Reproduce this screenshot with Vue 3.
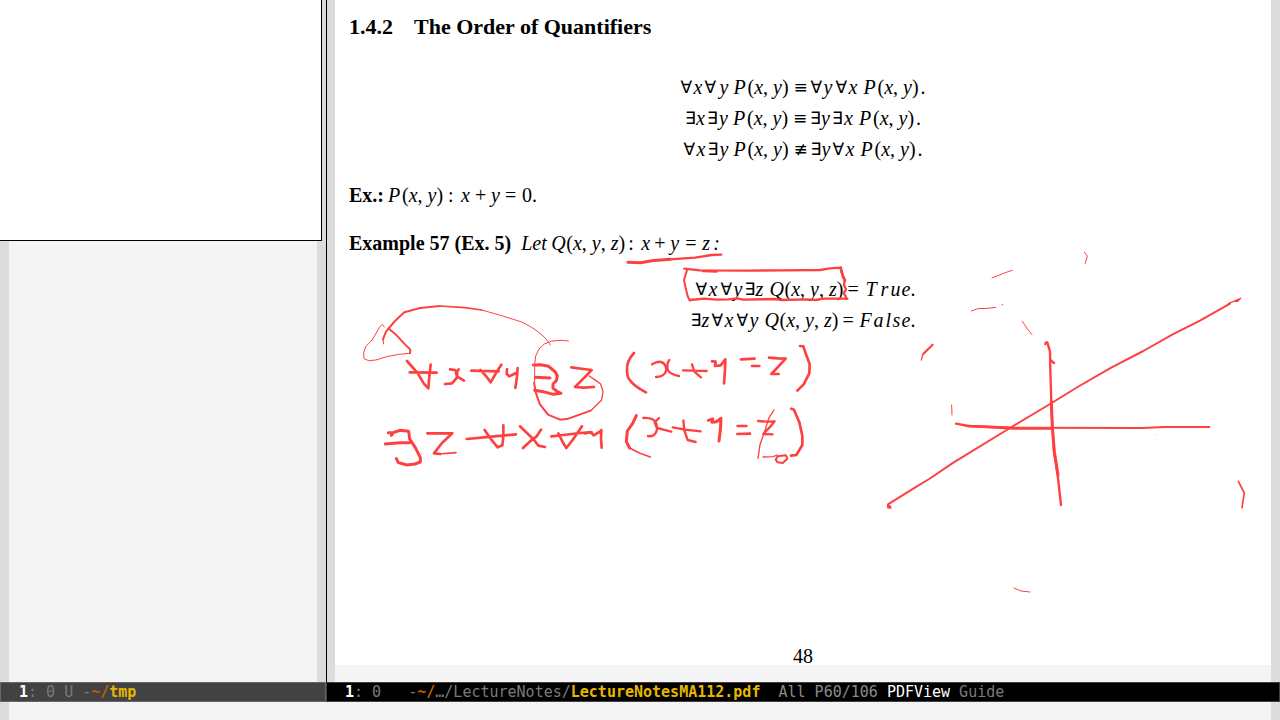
<script setup>
// Each token: [text, advance class, kind]
const q = 'quant'
const v = 'var'
const o = 'op'
const r = 'rel'
const quantifierRules = [
  [['∀', 'w13', q], ['x', 'w11', v], ['∀', 'w15', q], ['y', 'w14', v], ['P', 'w14', v], ['xy', 'w46', 'args'], ['≡', 'w17', r], ['∀', 'w13', q], ['y', 'w12', v], ['∀', 'w13', q], ['x', 'w15', v], ['P', 'w14', v], ['xy', 'w43', 'args'], ['.', 'w5', o]],
  [['∃', 'w11', q], ['x', 'w11', v], ['∃', 'w12', q], ['y', 'w14', v], ['P', 'w14', v], ['xy', 'w46', 'args'], ['≡', 'w17', r], ['∃', 'w11', q], ['y', 'w11', v], ['∃', 'w12', q], ['x', 'w15', v], ['P', 'w14', v], ['xy', 'w43', 'args'], ['.', 'w5', o]],
  [['∀', 'w13', q], ['x', 'w11', v], ['∃', 'w12', q], ['y', 'w14', v], ['P', 'w14', v], ['xy', 'w46', 'args'], ['≢', 'w17', r], ['∃', 'w11', q], ['y', 'w11', v], ['∀', 'w13', q], ['x', 'w15', v], ['P', 'w14', v], ['xy', 'w43', 'args'], ['.', 'w5', o]]
]
const results = [
  [['∀', 'w13', q], ['x', 'w12', v], ['∀', 'w13', q], ['y', 'w11', v], ['∃', 'w11', q], ['z', 'w14', v], ['Q', 'w15', v], ['xyz', 'w63', 'args'], ['=', 'w18', o], ['T', 'w15', v], ['r', 'w10', v], ['u', 'w11', v], ['e', 'w9', v], ['.', 'w5', o]],
  [['∃', 'w11', q], ['z', 'w10', v], ['∀', 'w13', q], ['x', 'w12', v], ['∀', 'w13', q], ['y', 'w15', v], ['Q', 'w15', v], ['xyz', 'w63', 'args'], ['=', 'w17', o], ['F', 'w14', v], ['a', 'w12', v], ['l', 'w7', v], ['s', 'w9', v], ['e', 'w9', v], ['.', 'w5', o]]
]
const pathLead = ': 0   -'
const pathGap = '  '
</script>

<template>
  <div class="frame">
    <div class="windows">
      <section class="pane left">
        <div class="buffer"></div>
        <div class="modeline idle"><b class="num">1</b>: 0 U -<b class="dir">~/</b><b class="file">tmp</b></div>
        <div class="preview"></div>
      </section>
      <section class="pane right">
        <div class="buffer">
          <article class="page">
            <h1><span class="secnum">1.4.2</span>The Order of Quantifiers</h1>
            <div class="rules">
              <div v-for="(row, i) in quantifierRules" :key="i" class="eq">
                <span v-for="(t, j) in row" :key="j" :class="['tok', t[1], t[2]]"><template v-if="t[2] === 'args'">(<i>x</i>, <i>y</i>)</template><template v-else>{{ t[0] }}</template></span>
              </div>
            </div>
            <p class="ex"><b>Ex.:</b><span class="eq lead"><i class="tok w14">P</i><span class="tok w46">(<i>x</i>, <i>y</i>)</span><span class="tok w13">:</span><i class="tok w14">x</i><span class="tok w16">+</span><i class="tok w14">y</i><span class="tok w17">=</span>0.</span></p>
            <p class="example"><b>Example 57 (Ex. 5)</b><span class="eq let"><i class="tok w30">Let</i><i class="tok w15">Q</i><span class="tok w62">(<i>x</i>, <i>y</i>, <i>z</i>)</span><span class="tok w13">:</span><i class="tok w13">x</i><span class="tok w16">+</span><i class="tok w15">y</i><span class="tok w17">=</span><i class="tok w11">z</i><i>:</i></span></p>
            <div class="results">
              <div v-for="(row, i) in results" :key="i" class="eq">
                <span v-for="(t, j) in row" :key="j" :class="['tok', t[1], t[2]]"><template v-if="t[2] === 'args'">(<i>x</i>, <i>y</i>, <i>z</i>)</template><template v-else>{{ t[0] }}</template></span>
              </div>
            </div>
            <footer>48</footer>
          </article>
        </div>
        <div class="modeline"><b class="num">1</b>{{ pathLead }}<b class="dir">~/</b>…/LectureNotes/<b class="file">LectureNotesMA112.pdf</b>{{ pathGap }}<span class="pos">All P60/106</span> <span class="mode">PDFView</span> Guide</div>
      </section>
    </div>
    <div class="echo"></div>

    <svg class="ink" width="1280" height="720" viewBox="0 0 1280 720" aria-hidden="true">
      <!-- underline and box -->
      <g transform="translate(600 230) scale(.33333)" stroke-width="7">
        <path d="M84 97L122 98 155 92 210 88" stroke-width="9" />
        <path d="M210 88L285 83 335 75 364 74" />
        <path d="M253 116L300 121 440 122 545 121 660 120 690 115 722 113 725 128 734 150 732 165 738 178 731 190 736 197 740 207" />
        <path d="M310 123L350 124M722 113L729 140 735 152" stroke-width="8" />
        <path d="M270 210L312 206 350 209 385 208 410 205 430 209 525 207 545 210 620 208 648 210 670 206 742 206" />
        <path d="M262 117L252 150 256 170 263 198 269 212" stroke-width="6" />
      </g>
      <!-- quantifier notes and arrow -->
      <g transform="translate(350 290) scale(.33333)">
        <path d="M601 165C590 145 565 120 515 96L455 77 395 60" stroke-width="3" />
        <path d="M395 60L345 53 270 48" stroke-width="5" />
        <path d="M270 48L210 54 163 67 135 93 108 125 99 148" stroke-width="6" />
        <path d="M99 145L101 162M103 111L97 103 89 111 67 149 47 170 41 189 42 206 56 212 78 210 110 200 147 193 180 190" stroke-width="3" />
        <path d="M115 115L138 134 162 160 181 179 180 190" stroke-width="6" />
        <path d="M655 153L637 151 605 153 583 162 567 177 557 198 554 225 554 280" stroke-width="3" />
        <path d="M552 278L558 310 570 343 594 374 630 389 655 386 722 362" stroke-width="6" />
        <path d="M722 362L755 330 759 305 752 282 738 272 718 258" stroke-width="4" />
        <path d="M171 213L202 248 221 280 235 295 237 270 242 224M179 247L260 248" stroke-width="8" />
        <path d="M300 238L315 240 322 250 320 264 306 280 285 282M326 238L318 250 322 260 342 272" stroke-width="8" />
        <path d="M364 242L446 244M391 240L408 258 422 277 438 249 454 224" stroke-width="8" />
        <path d="M471 237L470 252 478 259 498 249M503 234L501 260 496 294" stroke-width="8" />
        <path d="M550 225L572 224 596 229 616 246 622 258 619 272 609 282 609 294 621 304 633 310 610 313 580 305 554 301M556 262L600 264" stroke-width="9" />
        <path d="M664 232L700 237 725 240 700 266 675 291 700 293 732 291" stroke-width="8" />
        <path d="M115 428L130 428 124 436M135 426L150 421 176 424 179 447 196 473 211 503 211 516 195 522 171 525 145 518 139 506M106 462L150 458 178 458" stroke-width="9" />
        <path d="M232 430L307 430 276 459 252 490 270 492" stroke-width="8" />
        <path d="M265 492L318 488" stroke-width="5" />
        <path d="M350 447L425 440 498 433M404 420L424 449 443 472 457 466 460 440 460 406" stroke-width="8" />
        <path d="M510 409L527 425 552 449 565 467 585 471M573 419L560 439 539 455 519 474" stroke-width="8" />
        <path d="M604 439L640 435 690 429 725 427M625 430L638 456 649 474 670 447 696 409" stroke-width="8" />
        <path d="M705 430L722 426 731 436 753 423M754 420L753 447 755 473" stroke-width="8" />
      </g>
      <g transform="translate(600 330) scale(.33333)">
        <path d="M102 69Q80 92 81 120Q81 142 90 151Q103 170 138 187" stroke-width="8" />
        <path d="M156 103Q183 87 195 105C204 123 195 140 168 141M208 90Q200 99 203 119Q210 133 237 138" stroke-width="7" />
        <path d="M249 121L320 123M276 103L283 125 303 142" stroke-width="7" />
        <path d="M336 94L347 95 345 108 362 106 376 88 375 120 372 160" stroke-width="8" />
        <path d="M423 88L464 86M456 108L478 108" stroke-width="8" />
        <path d="M507 83L533 85 557 86 535 110 514 132 536 132" stroke-width="8" />
        <path d="M600 48L610 49 619 76 629 102 628 130 611 163 592 182" stroke-width="8" />
        <path d="M109 257L98 280 82 303 79 335 89 354" stroke-width="9" />
        <path d="M87 353L120 370 151 381" stroke-width="5" />
        <path d="M130 264Q162 262 169 281C176 305 163 322 144 318M177 264L164 277 170 293 190 299 214 305" stroke-width="7" />
        <path d="M218 292L255 299 302 304M250 271L253 301 263 330 287 336" stroke-width="7" />
        <path d="M325 271L338 267 336 277 349 275 363 265 361 300 357 333" stroke-width="9" />
        <path d="M413 288L439 288M412 312L450 311" stroke-width="8" />
        <path d="M474 273L500 275 524 274 508 293 490 312 518 313" stroke-width="7" />
        <path d="M522 240L507 263 496 298 480 344 474 385" stroke-width="4" />
        <path d="M489 381L520 380 531 375" stroke-width="4" />
        <path d="M533 379L558 376 562 386 548 399 533 397 527 389Z" stroke-width="6" />
        <path d="M574 236L582 239 598 277 607 318 607 345 589 375 573 377" stroke-width="8" />
      </g>
      <!-- graph and stray marks -->
      <g transform="translate(870 240) scale(.33333)">
        <path d="M62 803L54 802 54 793 120 752 182 714 250 668 420 564 540 492 628 438 725 382 820 333 908 283 990 242 1080 191" stroke-width="6" />
        <path d="M60 799L55 802" stroke-width="7" />
        <path d="M1075 191L1112 175 1103 184 1095 184" stroke-width="4" />
        <path d="M526 312L527 308 532 307 540 335 541 390 544 490 547 560 552 635 563 705 573 795" stroke-width="7" />
        <path d="M544 485L547 560 553 635 564 705" stroke-width="9" />
        <path d="M541 360L552 369M258 551L295 558 350 560 425 563" stroke-width="7" />
        <path d="M295 558L430 565 545 565" stroke-width="8" />
        <path d="M425 563L815 564 885 561 1018 561" stroke-width="6" />
        <path d="M245 495L246 525" stroke-width="3" />
        <path d="M154 360L158 345 188 314" stroke-width="4" />
        <path d="M160 341L188 314" stroke-width="6" />
        <path d="M304 213L323 206 355 205 377 202M396 194L399 195M366 114L400 100 427 91M457 244L470 264 486 284M643 37L652 48 646 70" stroke-width="3" />
        <path d="M859 583L860 584" stroke-width="1" />
        <path d="M1105 724L1123 759 1116 803" stroke-width="5" />
      </g>
      <path d="M1014 588L1021 591 1030 592" stroke-width="1" />
    </svg>
  </div>
</template>

<style>
body {
  margin: 0;
}
</style>

<style scoped>
.frame {
  position: relative;
  display: flex;
  flex-direction: column;
  min-height: 100vh;
  overflow: hidden;
  background: #f4f4f4;
}
.windows {
  display: flex;
  flex: 1;
}
.pane {
  display: flex;
  flex-direction: column;
  position: relative;
}
.left {
  flex: 0 0 326px;
}
.right {
  flex: 1;
  min-width: 0;
  padding-left: 1px;
}
.buffer {
  flex: 1;
  display: flex;
  border: solid #dcdcdc;
  border-width: 0 9px;
}
.right .buffer {
  border-left-width: 8px;
  padding-bottom: 17px;
  position: relative;
}
.right .buffer::before {
  content: "";
  position: absolute;
  left: -9px;
  top: 0;
  bottom: 0;
  width: 1px;
  background: #000;
}
.right .modeline {
  margin-left: -1px;
}
.preview {
  position: absolute;
  top: 0;
  left: 0;
  width: 321px;
  height: 240px;
  background: #fff;
  border: solid #000;
  border-width: 0 1px 1px 0;
}
.page {
  flex: 1;
  display: flex;
  flex-direction: column;
  background: #fff;
  color: #000;
  padding: 11px 14px 0;
  font: 20px/31px "Liberation Serif", serif;
}
h1 {
  margin: 0;
  font-size: 22px;
  line-height: 31px;
  font-weight: bold;
}
.secnum {
  display: inline-block;
  width: 65px;
}
p {
  margin: 0;
  display: flex;
}
.rules {
  margin-top: 30px;
}
.rules .eq {
  justify-content: center;
}
.ex {
  margin-top: 15px;
}
.example {
  margin-top: 17px;
}
.results {
  margin-top: 15px;
  align-self: center;
}
.results .eq {
  justify-content: flex-end;
}
.eq {
  display: flex;
  height: 31px;
}
.lead {
  margin-left: 4px;
}
.let {
  margin-left: 10px;
}
.tok {
  flex: none;
  white-space: nowrap;
}
.var {
  font-style: italic;
}
.quant,
.rel {
  font-family: "DejaVu Sans", sans-serif;
  font-size: 17px;
}
.w5 { width: 5px; }
.w7 { width: 7px; }
.w9 { width: 9px; }
.w10 { width: 10px; }
.w11 { width: 11px; }
.w12 { width: 12px; }
.w13 { width: 13px; }
.w14 { width: 14px; }
.w15 { width: 15px; }
.w16 { width: 16px; }
.w17 { width: 17px; }
.w18 { width: 18px; }
.w30 { width: 30px; }
.w43 { width: 43px; }
.w46 { width: 46px; }
.w62 { width: 62px; }
.w63 { width: 63px; }
footer {
  margin-top: auto;
  text-align: center;
  line-height: 18px;
}
.modeline {
  box-sizing: border-box;
  height: 20px;
  padding-left: 18px;
  border: 1px solid #404040;
  background: #000;
  color: #7a7a7a;
  font: 15px/18px "DejaVu Sans Mono", monospace;
  white-space: pre;
  overflow: hidden;
}
.idle {
  background: #424245;
  border-color: #666;
}
.num,
.mode {
  color: #fff;
}
.dir {
  color: #c65d00;
}
.file {
  color: #e5b800;
}
.pos {
  color: #8a8a8a;
}
.echo {
  height: 18px;
  border: solid #dcdcdc;
  border-width: 0 9px;
}
.ink {
  position: absolute;
  top: 0;
  left: 0;
  pointer-events: none;
  fill: none;
  stroke: #ff4040;
  stroke-linecap: round;
  stroke-linejoin: round;
}
</style>
